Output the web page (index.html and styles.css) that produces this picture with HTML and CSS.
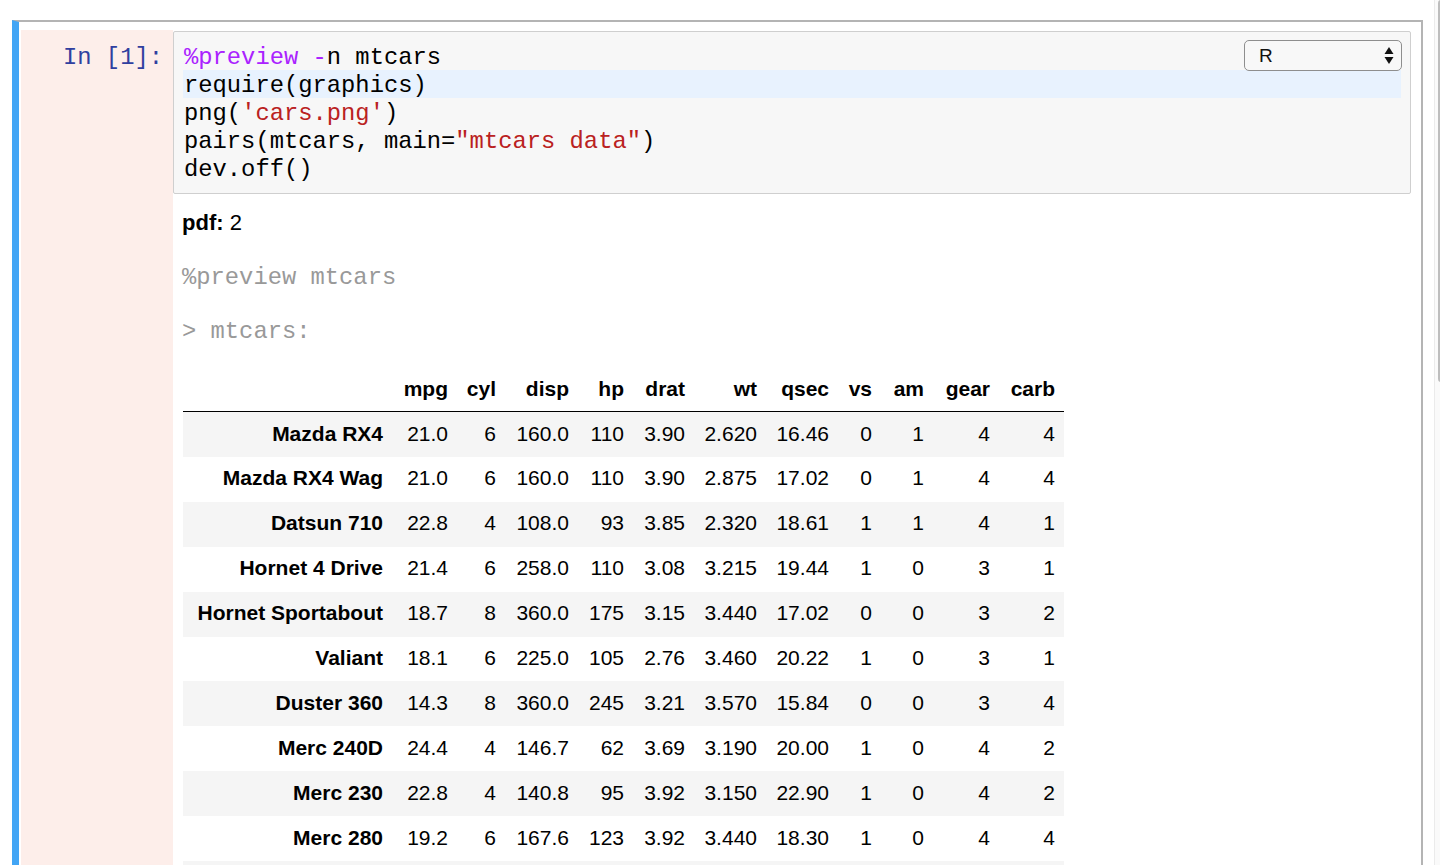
FILE: index.html
```html
<!DOCTYPE html>
<html>
<head>
<meta charset="utf-8">
<link rel="stylesheet" href="styles.css">
</head>
<body>
<div class="viewport">
  <div class="cell">
    <div class="prompt-col">
      <div class="prompt">In [1]:</div>
    </div>
    <div class="main">
      <div class="editor">
        <div class="code">
          <div class="line"><span class="magic">%preview</span> <span class="magic">-</span>n mtcars</div>
          <div class="line active">require(graphics)</div>
          <div class="line">png(<span class="str">'cars.png'</span>)</div>
          <div class="line">pairs(mtcars, main=<span class="str">"mtcars data"</span>)</div>
          <div class="line">dev.off()</div>
        </div>
        <div class="kernel-select">
          <span class="kernel-name">R</span>
          <svg class="kernel-arrows" width="10" height="20" viewBox="0 0 10 20"><path d="M5 1 L9.5 8 L0.5 8 Z" fill="#111"/><path d="M0.5 11 L9.5 11 L5 18 Z" fill="#111"/></svg>
        </div>
      </div>
      <div class="output">
        <div class="pdf"><b>pdf:</b> 2</div>
        <div class="mono-gray preview">%preview mtcars</div>
        <div class="mono-gray varname">&gt; mtcars:</div>
        <table class="df">
          <colgroup>
            <col class="c-idx"><col class="c-mpg"><col class="c-cyl"><col class="c-disp"><col class="c-hp"><col class="c-drat"><col class="c-wt"><col class="c-qsec"><col class="c-vs"><col class="c-am"><col class="c-gear"><col class="c-carb">
          </colgroup>
          <thead>
            <tr><th></th><th>mpg</th><th>cyl</th><th>disp</th><th>hp</th><th>drat</th><th>wt</th><th>qsec</th><th>vs</th><th>am</th><th>gear</th><th>carb</th></tr>
          </thead>
          <tbody>
            <tr><th>Mazda RX4</th><td>21.0</td><td>6</td><td>160.0</td><td>110</td><td>3.90</td><td>2.620</td><td>16.46</td><td>0</td><td>1</td><td>4</td><td>4</td></tr>
            <tr><th>Mazda RX4 Wag</th><td>21.0</td><td>6</td><td>160.0</td><td>110</td><td>3.90</td><td>2.875</td><td>17.02</td><td>0</td><td>1</td><td>4</td><td>4</td></tr>
            <tr><th>Datsun 710</th><td>22.8</td><td>4</td><td>108.0</td><td>93</td><td>3.85</td><td>2.320</td><td>18.61</td><td>1</td><td>1</td><td>4</td><td>1</td></tr>
            <tr><th>Hornet 4 Drive</th><td>21.4</td><td>6</td><td>258.0</td><td>110</td><td>3.08</td><td>3.215</td><td>19.44</td><td>1</td><td>0</td><td>3</td><td>1</td></tr>
            <tr><th>Hornet Sportabout</th><td>18.7</td><td>8</td><td>360.0</td><td>175</td><td>3.15</td><td>3.440</td><td>17.02</td><td>0</td><td>0</td><td>3</td><td>2</td></tr>
            <tr><th>Valiant</th><td>18.1</td><td>6</td><td>225.0</td><td>105</td><td>2.76</td><td>3.460</td><td>20.22</td><td>1</td><td>0</td><td>3</td><td>1</td></tr>
            <tr><th>Duster 360</th><td>14.3</td><td>8</td><td>360.0</td><td>245</td><td>3.21</td><td>3.570</td><td>15.84</td><td>0</td><td>0</td><td>3</td><td>4</td></tr>
            <tr><th>Merc 240D</th><td>24.4</td><td>4</td><td>146.7</td><td>62</td><td>3.69</td><td>3.190</td><td>20.00</td><td>1</td><td>0</td><td>4</td><td>2</td></tr>
            <tr><th>Merc 230</th><td>22.8</td><td>4</td><td>140.8</td><td>95</td><td>3.92</td><td>3.150</td><td>22.90</td><td>1</td><td>0</td><td>4</td><td>2</td></tr>
            <tr><th>Merc 280</th><td>19.2</td><td>6</td><td>167.6</td><td>123</td><td>3.92</td><td>3.440</td><td>18.30</td><td>1</td><td>0</td><td>4</td><td>4</td></tr>
            <tr class="empty"><th></th><td></td><td></td><td></td><td></td><td></td><td></td><td></td><td></td><td></td><td></td><td></td></tr>
          </tbody>
        </table>
      </div>
    </div>
  </div>
  <div class="scrollbar"><div class="thumb"></div></div>
</div>
</body>
</html>
```
FILE: styles.css
```css
* { box-sizing: border-box; }
html, body { margin: 0; padding: 0; background: #fff; }
body { font-family: "Liberation Sans", Arial, sans-serif; color: #000; }

.viewport {
  position: relative;
  width: 1440px;
  height: 865px;
  overflow: hidden;
  padding-top: 20px;
}

.cell {
  display: flex;
  width: 1411px;
  margin-left: 12px;
  min-height: 900px;
  border-top: 2px solid #b4b4b4;
  border-right: 2px solid #b4b4b4;
  border-left: 7px solid #42a5f5;
  padding: 8px 10px 0 2px;
}

.prompt-col {
  width: 152px;
  flex: none;
  background: #fdeeea;
}
.prompt {
  font-family: "Liberation Mono", "Courier New", monospace;
  font-size: 23.8px;
  line-height: 24px;
  color: #303f9f;
  text-align: right;
  padding: 16px 10px 0 0;
}

.main { flex: 1; min-width: 0; }

.editor {
  position: relative;
  margin-top: 1px;
  background: #f7f7f7;
  border: 1px solid #cfcfcf;
  border-radius: 2px;
  padding: 10px 9px 11px 9px;
}
.code {
  font-family: "Liberation Mono", "Courier New", monospace;
  font-size: 23.8px;
  line-height: 24px;
  color: #000;
}
.line { white-space: pre; height: 28px; padding: 4px 0 0 1px; }
.line.active { background: #e8f2fe; }
.magic { color: #aa22ff; }
.str { color: #ba2121; }

.kernel-select {
  position: absolute;
  top: 8px;
  right: 8px;
  width: 158px;
  height: 31px;
  border: 1.5px solid #8e8e8e;
  border-radius: 5px;
  background: #f8f8f8;
  display: flex;
  align-items: center;
  justify-content: space-between;
  padding: 0 7px 0 14px;
}
.kernel-name { font-size: 19px; color: #111; }
.kernel-arrows { display: block; }

.output { padding: 14px 0 0 9px; }
.pdf { font-size: 22px; line-height: 30px; }
.mono-gray {
  font-family: "Liberation Mono", "Courier New", monospace;
  font-size: 23.8px;
  line-height: 30px;
  color: #999;
  white-space: pre;
}
.preview { margin-top: 25px; }
.varname { margin-top: 24px; }

.df {
  margin: 20px 0 0 1px;
  border-collapse: collapse;
  table-layout: fixed;
  width: 881px;
  font-size: 21px;
  line-height: 25px;
}
.df th, .df td {
  padding: 9.5px 9px 10.5px 9px;
  line-height: 24.9px;
  text-align: right;
  white-space: nowrap;
}
.df th { font-weight: bold; }
.df thead th { padding: 9px 9px 10px 9px; line-height: 25px; border-bottom: 1px solid #000; }
.df tbody tr:nth-child(odd) { background: #f5f5f5; }
.df tr.empty th, .df tr.empty td { height: 44.9px; }

.c-idx { width: 209px; }
.c-mpg { width: 65px; }
.c-cyl { width: 48px; }
.c-disp { width: 73px; }
.c-hp { width: 55px; }
.c-drat { width: 61px; }
.c-wt { width: 72px; }
.c-qsec { width: 72px; }
.c-vs { width: 43px; }
.c-am { width: 52px; }
.c-gear { width: 66px; }
.c-carb { width: 65px; }

.scrollbar {
  position: absolute;
  top: 0;
  left: 1434px;
  width: 6px;
  height: 865px;
  background: #fafafa;
  border-left: 1px solid #ebebeb;
}
.thumb {
  margin-left: 3px;
  width: 6px;
  height: 382px;
  background: #bdbdbd;
  border-radius: 3px;
}
```
